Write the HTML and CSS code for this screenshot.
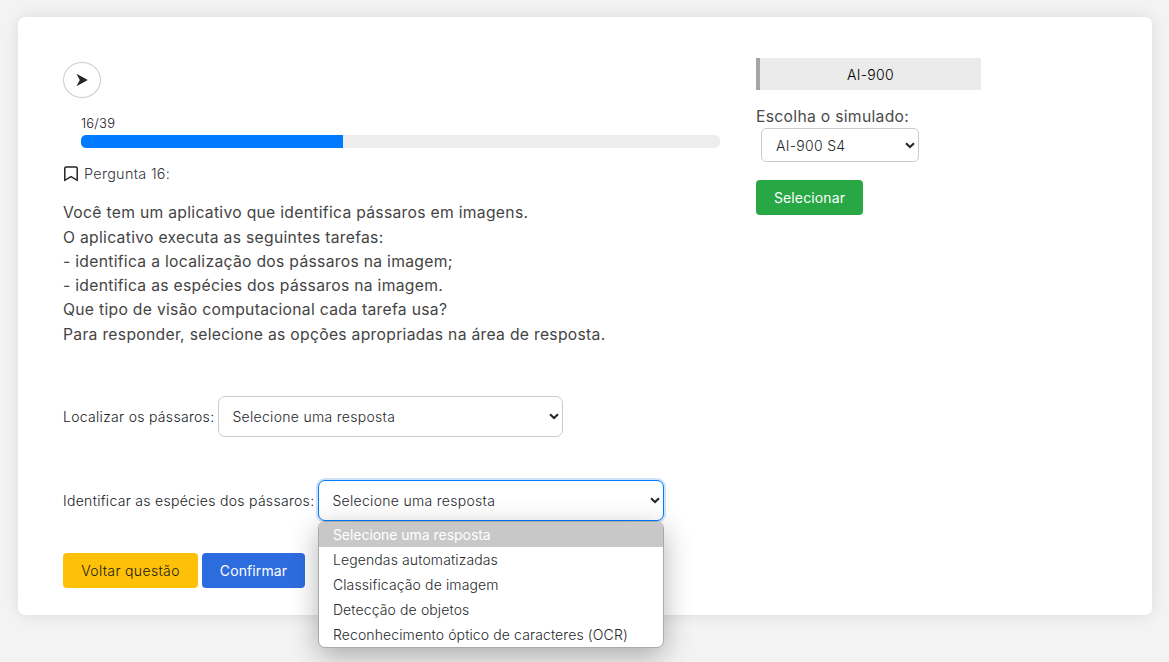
FILE: index.html
```html
<!DOCTYPE html>
<html lang="pt-BR">
<head>
<meta charset="utf-8">
<title>Simulado AI-900</title>
<link rel="stylesheet" href="styles.css">
</head>
<body>
<main class="card">
  <section class="quiz">
    <button class="next" type="button" aria-label="Avançar">
      <svg width="12" height="14" viewBox="0 0 12 14"><path d="M0.4 0.8 L11.8 7 L0.4 13.2 L3.8 7 Z" fill="#212529"/></svg>
    </button>
    <div class="progress">
      <div class="count"><span>16/39</span></div>
      <div class="track"><div class="fill" style="width:41.03%"></div></div>
    </div>
    <div class="heading">
      <svg width="16" height="16" viewBox="0 0 16 16" fill="none" stroke="#212529" stroke-width="1.5"><path d="M1.8 14.3 V2.2 Q1.8 1 3 1 H13 Q14.2 1 14.2 2.2 V14.3 L8 10.7 Z"/></svg>
      <span>Pergunta 16:</span>
    </div>
    <div class="question">
      <div><span>Você tem um aplicativo que identifica pássaros em imagens.</span></div>
      <div><span>O aplicativo executa as seguintes tarefas:</span></div>
      <div><span>- identifica a localização dos pássaros na imagem;</span></div>
      <div><span>- identifica as espécies dos pássaros na imagem.</span></div>
      <div><span>Que tipo de visão computacional cada tarefa usa?</span></div>
      <div><span>Para responder, selecione as opções apropriadas na área de resposta.</span></div>
    </div>
    <div class="field">
      <span class="label">Localizar os pássaros:</span>
      <div class="select"><span>Selecione uma resposta</span><svg class="chevron" width="10" height="7" viewBox="0 0 10 7"><path d="M1 1.2 L5 5 L9 1.2"/></svg></div>
    </div>
    <div class="field second">
      <span class="label">Identificar as espécies dos pássaros:</span>
      <div class="select focused"><span>Selecione uma resposta</span><svg class="chevron" width="10" height="7" viewBox="0 0 10 7"><path d="M1 1.2 L5 5 L9 1.2"/></svg>
        <div class="menu">
          <div class="option active"><span>Selecione uma resposta</span></div>
          <div class="option"><span>Legendas automatizadas</span></div>
          <div class="option"><span>Classificação de imagem</span></div>
          <div class="option"><span>Detecção de objetos</span></div>
          <div class="option"><span>Reconhecimento óptico de caracteres (OCR)</span></div>
        </div>
      </div>
    </div>
    <div class="actions">
      <button class="btn back" type="button">Voltar questão</button>
      <button class="btn confirm" type="button">Confirmar</button>
    </div>
  </section>
  <aside class="side">
    <div class="exam"><span>AI-900</span></div>
    <div class="choose"><span>Escolha o simulado:</span></div>
    <div class="select small"><span>AI-900 S4</span><svg class="chevron" width="10" height="7" viewBox="0 0 10 7"><path d="M1 1.2 L5 5 L9 1.2"/></svg></div>
    <button class="btn pick" type="button"><span>Selecionar</span></button>
  </aside>
</main>
</body>
</html>
```

FILE: styles.css
```css
* { box-sizing: border-box; }
body {
  margin: 0;
  height: 662px;
  padding: 17px 17px 0 18px;
  overflow: hidden;
  background: #f3f3f3;
  color: #16191c;
  font: 300 14px/22px Inter, "Liberation Sans", sans-serif;
  letter-spacing: 0.3px;
}
.card {
  display: flex;
  height: 598px;
  padding: 41px 45px 0;
  background: #fff;
  border-radius: 7px;
  box-shadow: 0 0 15px rgba(0, 0, 0, 0.1);
}
.quiz { width: 693px; padding-top: 4px; }
.side { width: 225px; }
button { font: inherit; letter-spacing: inherit; }
.next {
  display: flex;
  align-items: center;
  justify-content: center;
  width: 38px;
  height: 36px;
  padding: 0;
  background: #fff;
  border: 1px solid #ccc;
  border-radius: 50%;
}
.progress { width: 639px; margin: 14px 0 0 18px; }
.count { height: 23px; font-size: 13px; line-height: 22px; letter-spacing: 0.2px; }
.track { height: 13px; background: #ededed; border-radius: 5px; overflow: hidden; }
.fill { height: 13px; background: #007bff; }
.heading {
  display: flex;
  align-items: center;
  gap: 5px;
  height: 22px;
  margin-top: 15px;
  color: #34393e;
  font-size: 14.4px;
}
.question {
  height: 147px;
  margin-top: 15px;
  padding-top: 1.3px;
  color: #444;
  font-size: 15.7px;
  font-weight: 400;
  letter-spacing: 0.295px;
  line-height: 24.3px;
}
.field { display: flex; align-items: center; gap: 4px; height: 41px; margin-top: 49px; white-space: nowrap; }
.label, .field .select > span { padding-top: 1px; }
.second { margin-top: 43px; }
.select {
  position: relative;
  display: flex;
  align-items: center;
  justify-content: space-between;
  width: 345px;
  height: 41px;
  padding: 0 3px 0 13px;
  background: #fff;
  border: 1px solid #ccc;
  border-radius: 7px;
  color: #25292d;
}
.chevron { fill: none; stroke: #212529; stroke-width: 2; }
.focused { width: 346px; border-color: #007bff; box-shadow: 0 0 0 2px rgba(0, 90, 230, 0.18); }
.menu {
  position: absolute;
  z-index: 2;
  top: 40px;
  left: -1px;
  width: 346px;
  height: 127px;
  overflow: hidden;
  background: #fff;
  border: 1px solid #aaa;
  border-radius: 7px;
  box-shadow: 0 8px 28px rgba(0, 0, 0, 0.3);
  letter-spacing: 0.12px;
}
.option { height: 25px; padding-left: 13.5px; line-height: 26px; }
.active { background: #c8c8c8; color: #fff; font-weight: 400; letter-spacing: -0.04px; }
.actions { display: flex; gap: 4px; margin-top: 32px; }
.btn {
  display: flex;
  justify-content: center;
  height: 35px;
  padding: 7px 0 0;
  border: 0;
  border-radius: 4px;
  color: #fff;
  font-weight: 400;
  letter-spacing: 0.12px;
  line-height: 22px;
}
.back { width: 135px; background: #ffc107; color: #16191c; font-weight: 300; letter-spacing: 0.35px; }
.confirm { width: 103px; background: #2d6cdf; }
.exam {
  height: 32px;
  border-left: 4px solid #a5a5a5;
  background: #ebebeb;
  text-align: center;
  line-height: 34px;
  color: #000;
}
.choose { height: 38px; padding-top: 15px; line-height: 24px; font-size: 15.7px; font-weight: 400; color: #4a4a4a; }
.small { width: 158px; height: 34px; margin-left: 5px; padding-left: 14px; border-radius: 5px; }
.small > span { padding-top: 2px; }
.pick { width: 107px; margin-top: 18px; background: #28a745; }
```
